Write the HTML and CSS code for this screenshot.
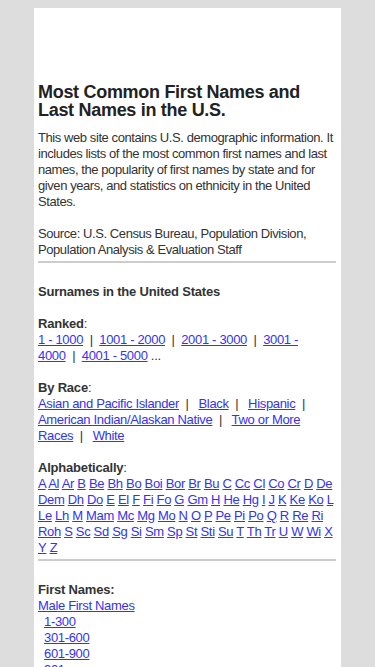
FILE: index.html
```html
<!DOCTYPE html>
<html lang="en">
<head>
    <meta charset="UTF-8">
    <meta name="viewport" content="width=device-width, initial-scale=1.0">
    <title>Most Common First Names and Last Names in the U.S.</title>
    <link rel="stylesheet" href="styles.css">
</head>
<body>
    <div class="page">
        <!-- ad slot -->
        <div class="ad-slot"></div>

        <h1>Most Common First Names and Last Names in the U.S.</h1>

        <p class="intro">
            This web site contains U.S. demographic information. It includes lists of the most common first names and last names, the popularity of first names by state and for given years, and statistics on ethnicity in the United States.
            <br><br>
            Source: U.S. Census Bureau, Population Division, Population Analysis &amp; Evaluation Staff
        </p>

        <hr>

        <!-- Surnames -->
        <div class="section">
            <b>Surnames in the United States</b>
            <br><br>
            <b>Ranked</b>:<br>
            <a href="#">1 - 1000</a>&nbsp;&nbsp;|&nbsp; <a href="#">1001 - 2000</a>&nbsp;&nbsp;|&nbsp; <a href="#">2001 - 3000</a>&nbsp;&nbsp;|&nbsp; <a href="#">3001 - 4000</a>&nbsp;&nbsp;|&nbsp; <a href="#">4001 - 5000</a> ...
            <br><br>
            <b>By Race</b>:<br>
            <a href="#">Asian and Pacific Islander</a>&nbsp;&nbsp;|&nbsp;&nbsp; <a href="#">Black</a>&nbsp;&nbsp;|&nbsp;&nbsp; <a href="#">Hispanic</a>&nbsp;&nbsp;|
            <a href="#">American Indian/Alaskan Native</a>&nbsp;&nbsp;|&nbsp;&nbsp; <a href="#">Two or More Races</a>&nbsp;&nbsp;|&nbsp;&nbsp; <a href="#">White</a>
            <br><br>
            <b>Alphabetically</b>:<br>
            <a href="#">A</a> <a href="#">Al</a> <a href="#">Ar</a> <a href="#">B</a> <a href="#">Be</a> <a href="#">Bh</a> <a href="#">Bo</a> <a href="#">Boi</a> <a href="#">Bor</a> <a href="#">Br</a> <a href="#">Bu</a> <a href="#">C</a> <a href="#">Cc</a> <a href="#">Cl</a> <a href="#">Co</a> <a href="#">Cr</a> <a href="#">D</a> <a href="#">De</a>
            <a href="#">Dem</a> <a href="#">Dh</a> <a href="#">Do</a> <a href="#">E</a> <a href="#">El</a> <a href="#">F</a> <a href="#">Fi</a> <a href="#">Fo</a> <a href="#">G</a> <a href="#">Gm</a> <a href="#">H</a> <a href="#">He</a> <a href="#">Hg</a> <a href="#">I</a> <a href="#">J</a> <a href="#">K</a> <a href="#">Ke</a> <a href="#">Ko</a> <a href="#">L</a>
            <a href="#">Le</a> <a href="#">Lh</a> <a href="#">M</a> <a href="#">Mam</a> <a href="#">Mc</a> <a href="#">Mg</a> <a href="#">Mo</a> <a href="#">N</a> <a href="#">O</a> <a href="#">P</a> <a href="#">Pe</a> <a href="#">Pi</a> <a href="#">Po</a> <a href="#">Q</a> <a href="#">R</a> <a href="#">Re</a> <a href="#">Ri</a>
            <a href="#">Roh</a> <a href="#">S</a> <a href="#">Sc</a> <a href="#">Sd</a> <a href="#">Sg</a> <a href="#">Si</a> <a href="#">Sm</a> <a href="#">Sp</a> <a href="#">St</a> <a href="#">Sti</a> <a href="#">Su</a> <a href="#">T</a> <a href="#">Th</a> <a href="#">Tr</a> <a href="#">U</a> <a href="#">W</a> <a href="#">Wi</a> <a href="#">X</a>
            <a href="#">Y</a> <a href="#">Z</a>
        </div>

        <hr>

        <!-- First names -->
        <div class="section">
            <b>First Names:</b><br>
            <a href="#">Male First Names</a>
            <ul class="sub-list">
                <li><a href="#">1-300</a></li>
                <li><a href="#">301-600</a></li>
                <li><a href="#">601-900</a></li>
                <li><a href="#">901-</a></li>
            </ul>
        </div>
    </div>
</body>
</html>
```

FILE: styles.css
```css
* {
    margin: 0;
    padding: 0;
    box-sizing: border-box;
}

body {
    background: #dddddd;
    font-family: "Liberation Sans", Arial, Helvetica, sans-serif;
    font-size: 13px;
    line-height: 16px;
    letter-spacing: -0.33px;
    color: #333;
    padding-top: 8px;
}

.page {
    width: 307px;
    margin: 0 auto;
    padding: 4px 4px 20px 4px;
    background: #fff;
    min-height: 700px;
}

.ad-slot {
    height: 60px;
}

h1 {
    margin: 11px 1px 11px 0;
    font-size: 18px;
    line-height: 18px;
    letter-spacing: -0.3px;
    font-weight: bold;
    color: #222;
}

.intro {
    letter-spacing: -0.42px;
}

hr {
    border: none;
    border-top: 2px solid #cccccc;
    margin: 3px 1px 21px 0;
}

a {
    color: #3333f5;
    text-decoration: underline;
}

b {
    color: #333;
    letter-spacing: -0.2px;
}

.section {
    line-height: 16px;
}

.sub-list {
    list-style: none;
    padding-left: 6px;
}
```
